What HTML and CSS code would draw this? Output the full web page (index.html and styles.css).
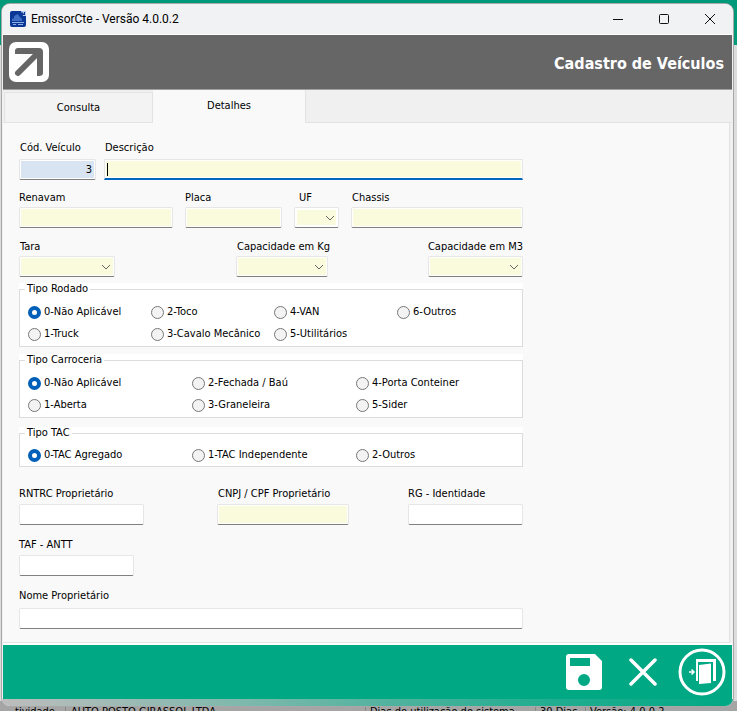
FILE: index.html
```html
<!DOCTYPE html>
<html lang="pt-BR">
<head>
<meta charset="utf-8">
<title>EmissorCte - Versão 4.0.0.2</title>
<link rel="stylesheet" href="styles.css">
</head>
<body>
<div class="backdrop">
  <div class="status">
    <span class="status-cell cell-a">tividade</span>
    <span class="status-cell cell-b">AUTO POSTO GIRASSOL LTDA</span>
    <span class="status-cell cell-c">Dias de utilização do sistema</span>
    <span class="status-cell cell-d">30 Dias</span>
    <span class="status-cell cell-e">Versão: 4.0.0.2</span>
  </div>
</div>
<main class="window">
  <header class="titlebar">
    <svg class="app-icon" viewBox="0 0 16 16" aria-hidden="true">
      <rect width="16" height="16" rx="2" fill="#0b3796"/>
      <path d="M6 4L8 3L9 5L12 8V10H2V8L4 7V5Z" fill="#3f6fc4"/>
      <path d="M2 11h12v1H2zM3 13h3v1H3zM8 13h5v1H8z" fill="#8fb0e6"/>
      <path d="M11 0h5v5h-3z" fill="#b9cdee"/>
      <path d="M12 1l2 2V1h1v3h-3z" fill="#0b3796"/>
    </svg>
    <span class="app-title">EmissorCte - Versão 4.0.0.2</span>
    <button class="win-btn" aria-label="Minimizar"><svg viewBox="0 0 12 12"><path d="M1 6.500h10"/></svg></button>
    <button class="win-btn" aria-label="Maximizar"><svg viewBox="0 0 12 12"><rect x="1.500" y="1.500" width="9" height="9" rx="1"/></svg></button>
    <button class="win-btn" aria-label="Fechar"><svg viewBox="0 0 12 12"><path d="M1 1l10 10M11 1L1 11"/></svg></button>
  </header>
  <div class="banner">
    <svg class="logo" viewBox="0 0 40 40" aria-hidden="true">
      <rect width="40" height="40" rx="7" fill="#fff"/>
      <path d="M6 12V9Q6 6 9 6H30Q34 6 34 10V31Q34 34 30 34H28V16L25 12Z" fill="#666"/>
      <path d="M9 31L27 13" stroke="#666" stroke-width="6" stroke-linecap="round"/>
    </svg>
    <h1>Cadastro de Veículos</h1>
  </div>
  <nav class="tabs">
    <button class="tab">Consulta</button>
    <button class="tab active">Detalhes</button>
  </nav>
  <form class="page">
    <div class="form">
      <div class="row r1">
        <div class="field w-cod ind"><label for="cod">Cód. Veículo</label><input id="cod" class="code" value="3"></div>
        <div class="field grow ind"><label for="desc">Descrição</label><span class="focus"><input id="desc" class="req"></span></div>
      </div>
      <div class="row r2">
        <div class="field w-ren"><label for="ren">Renavam</label><input id="ren" class="req"></div>
        <div class="field w-pla"><label for="pla">Placa</label><input id="pla" class="req"></div>
        <div class="field w-uf far"><label for="uf">UF</label><select id="uf" class="req inset"><option></option></select></div>
        <div class="field w-cha ind"><label for="cha">Chassis</label><input id="cha" class="req"></div>
      </div>
      <div class="row r3">
        <div class="field w-tara ind"><label for="tara">Tara</label><select id="tara" class="req"><option></option></select></div>
        <div class="field w-kg ind"><label for="kg">Capacidade em Kg</label><select id="kg" class="req"><option></option></select></div>
        <div class="field w-m3 ind"><label for="m3">Capacidade em M3</label><select id="m3" class="req"><option></option></select></div>
      </div>
      <fieldset class="group">
        <legend>Tipo Rodado</legend>
        <div class="radios four">
          <label><input type="radio" name="rodado" checked>0-Não Aplicável</label>
          <label><input type="radio" name="rodado">1-Truck</label>
          <label><input type="radio" name="rodado">2-Toco</label>
          <label><input type="radio" name="rodado">3-Cavalo Mecânico</label>
          <label><input type="radio" name="rodado">4-VAN</label>
          <label><input type="radio" name="rodado">5-Utilitários</label>
          <label><input type="radio" name="rodado">6-Outros</label>
        </div>
      </fieldset>
      <fieldset class="group">
        <legend>Tipo Carroceria</legend>
        <div class="radios three">
          <label><input type="radio" name="carroceria" checked>0-Não Aplicável</label>
          <label><input type="radio" name="carroceria">1-Aberta</label>
          <label><input type="radio" name="carroceria">2-Fechada / Baú</label>
          <label><input type="radio" name="carroceria">3-Graneleira</label>
          <label><input type="radio" name="carroceria">4-Porta Conteiner</label>
          <label><input type="radio" name="carroceria">5-Sider</label>
        </div>
      </fieldset>
      <fieldset class="group small">
        <legend>Tipo TAC</legend>
        <div class="radios three single">
          <label><input type="radio" name="tac" checked>0-TAC Agregado</label>
          <label><input type="radio" name="tac">1-TAC Independente</label>
          <label><input type="radio" name="tac">2-Outros</label>
        </div>
      </fieldset>
      <div class="row r4">
        <div class="field w-rn"><label for="rn">RNTRC Proprietário</label><input id="rn"></div>
        <div class="field w-cnpj ind"><label for="cnpj">CNPJ / CPF Proprietário</label><input id="cnpj" class="req"></div>
        <div class="field w-rg"><label for="rg">RG - Identidade</label><input id="rg"></div>
      </div>
      <div class="row r5">
        <div class="field w-rg"><label for="taf">TAF - ANTT</label><input id="taf"></div>
      </div>
      <div class="row r6">
        <div class="field grow"><label for="nome">Nome Proprietário</label><input id="nome"></div>
      </div>
    </div>
  </form>
  <footer class="actions">
    <button aria-label="Salvar"><svg class="i-save" viewBox="0 0 36 36"><path fill-rule="evenodd" d="M3 0H29L36 7V33Q36 36 33 36H3Q0 36 0 33V3Q0 0 3 0ZM4 4V12H24V4ZM18 20a6 6 0 1 0 0 12a6 6 0 1 0 0-12Z" fill="#fff"/></svg></button>
    <button aria-label="Cancelar"><svg class="i-x" viewBox="0 0 28 28"><path d="M2 2L26 26M26 2L2 26" stroke="#fff" stroke-width="3.500" stroke-linecap="round" fill="none"/></svg></button>
    <button aria-label="Sair"><svg class="i-exit" viewBox="0 0 48 48"><circle cx="24" cy="24" r="22" fill="none" stroke="#fff" stroke-width="3"/><path d="M18 11H38V33H35V14H20V33H18Z" fill="#fff"/><path d="M21 17L33 15.500V35L21 36Z" fill="#fff"/><path d="M11 24H16M13.500 21.500L16 24L13.500 26.500" stroke="#fff" stroke-width="1.500" fill="none"/></svg></button>
  </footer>
  <div class="edge"></div>
</main>
</body>
</html>
```
FILE: styles.css
```css
* { box-sizing: border-box; }
body {
  margin: 0;
  height: 100vh;
  overflow: hidden;
  display: grid;
  color: #000;
  font: 11px/14px "DejaVu Sans Condensed", "Noto Sans", sans-serif;
}
.backdrop, .window { grid-area: 1 / 1; min-height: 0; }
.backdrop {
  display: flex;
  flex-direction: column;
  justify-content: flex-end;
  background: linear-gradient(#00997a 45px, #dcdcdc 45px);
}
.status {
  display: flex;
  height: 10px;
  overflow: hidden;
  background: #a5a5a5;
  white-space: nowrap;
}
.status-cell { border-right: 1px solid #888; overflow: hidden; line-height: 22px; }
.cell-a { width: 66px; padding-left: 15px; }
.cell-b { width: 300px; padding-left: 5px; }
.cell-c { width: 170px; padding-left: 4px; }
.cell-d { width: 50px; padding-left: 4px; }
.cell-e { flex: 1; border: 0; padding-left: 4px; }
.window {
  display: flex;
  flex-direction: column;
  margin: 4px 4px 5px 2px;
  padding: 0 1px;
  background: #f0f0f0;
  border-radius: 8px;
  overflow: hidden;
  box-shadow: 0 0 0 1px #a8a8a8;
}
button { font: inherit; border: 0; background: none; padding: 0; color: inherit; }
.titlebar {
  display: flex;
  align-items: center;
  height: 31px;
  margin: 0 -1px;
  padding-left: 8px;
  background: #f0f2f4;
  border-bottom: 1px solid #fff;
  font: 12px/16px Roboto, "Noto Sans", sans-serif;
}
.app-icon { width: 16px; height: 16px; margin-right: 5px; }
.app-title { flex: 1; }
.win-btn { width: 46px; height: 28px; display: grid; place-items: center; }
.win-btn svg { width: 12px; height: 12px; fill: none; stroke: #111; stroke-width: 1; }
.banner {
  display: flex;
  align-items: center;
  justify-content: space-between;
  height: 55px;
  padding: 0 8px 0 6px;
  background: #666;
  border-bottom: 1px solid #a39f9f;
  color: #fff;
}
.logo { width: 40px; height: 40px; }
h1 { margin: 4px 0 0; font: bold 16px/20px "DejaVu Sans Condensed", "Noto Sans", sans-serif; }
.tabs { display: flex; height: 33px; align-items: flex-end; padding-left: 1px; background: linear-gradient(#f0f0f0 32px, #e3e3e3 32px); }
.tab {
  width: 149px;
  height: 31px;
  border: 1px solid #e3e3e3;
  background: #f3f3f3;
}
.tab.active {
  width: 153px;
  height: 33px;
  padding-bottom: 1px;
  background: #f9f9f9;
  border-width: 0 1px 0 0;
}
.page {
  flex: 1;
  margin-right: 2px;
  padding: 18px 16px 0;
  background: #f9f9f9;
  border: 1px solid #e3e3e3;
  border-width: 0 1px 1px 0;
}
.form { max-width: 504px; }
.row { display: flex; }
.field { display: flex; flex-direction: column; }
.field label { white-space: nowrap; }
.ind label { padding-left: 1px; }
.far label { padding-left: 5px; }
.w-m3 label { align-self: flex-end; }
.grow { flex: 1; }
input:not([type]), select {
  appearance: none;
  width: 100%;
  height: 21px;
  margin: 0;
  padding: 0 3px;
  font: inherit;
  color: #000;
  background: #fff;
  border: 1px solid #e6e6e6;
  border-bottom-color: #808080;
  border-radius: 2px;
  box-shadow: inset 0 0 0 1px #fff;
  outline: 0;
}
input.req, select.req { background-color: #fafbdc; }
select {
  background-image: url("data:image/svg+xml,%3Csvg xmlns='http://www.w3.org/2000/svg' width='10' height='6'%3E%3Cpath d='M1 1l4 4 4-4' fill='none' stroke='%23666'/%3E%3C/svg%3E");
  background-repeat: no-repeat;
  background-position: right 3px center;
}
select.inset { box-shadow: inset 0 0 0 2px #fff; }
input.code { background: #d8e4f1; text-align: right; }
.focus { position: relative; }
.focus input:not([type]) { border-bottom: 2px solid #0067c0; border-radius: 0; }
.focus::after { content: ""; position: absolute; left: 3px; top: 4px; width: 1px; height: 13px; background: #000; }
.r1 { gap: 8px; }
.r1 .field { gap: 4px; }
.r2 { margin-top: 11px; gap: 12px; }
.r3 { margin-top: 12px; display: grid; grid-template-columns: 217fr 192fr 95fr; }
.r2 .field, .r3 .field { gap: 2px; }
.w-cod { width: 77px; }
.w-ren { width: 154px; }
.w-pla { width: 97px; }
.w-uf { width: 45px; }
.w-cha { flex: 1; }
.w-tara { width: 96px; }
.w-kg { width: 92px; }
.w-m3 { width: 95px; }
.group {
  min-width: 0;
  margin: 5px 0 0;
  padding: 0;
  border: 1px solid #dcdcdc;
  background: #fff;
  box-shadow: 0 -6px 0 #fff;
}
.group.small { margin-top: 7px; }
legend { margin-left: 5px; padding: 0 2px; }
.radios { display: grid; grid-auto-flow: column; grid-template-rows: 22px 22px; padding: 5px 2px 1px 8px; }
.four { grid-template-columns: repeat(4, 1fr); }
.three { grid-template-columns: repeat(3, 1fr); }
.group + .group { margin-top: 6px; }
.group + .group.small { margin-top: 8px; }
.single { grid-template-rows: 22px; padding-bottom: 0; padding-top: 4px; }
.radios label { display: flex; align-items: center; gap: 3px; white-space: nowrap; }
input[type="radio"] { appearance: none; width: 13px; height: 13px; margin: 0; border: 1px solid #777; border-radius: 50%; background: #f3f3f3; }
input[type="radio"]:checked { border: 4px solid #005fb8; background: #fff; }
.r4 { margin-top: 20px; display: grid; grid-template-columns: 198fr 191fr 115fr; }
.r5, .r6 { margin-top: 13px; }
.r4 .field, .r5 .field { gap: 3px; }
.r6 .field { gap: 5px; }
.w-rn { width: 125px; }
.w-cnpj { width: 132px; }
.w-rg { width: 115px; }
.actions {
  display: flex;
  align-items: center;
  justify-content: flex-end;
  height: 56px;
  padding-right: 6px;
  background: #00a884;
  border-top: 2px solid #fff;
}
.actions svg { display: block; }
.i-save { width: 36px; height: 36px; }
.i-x { width: 28px; height: 28px; margin: 0 21px 0 27px; }
.i-exit { width: 48px; height: 48px; }
.edge { height: 7px; margin: 0 -1px; background: linear-gradient(90deg, #bdbdbd, #7ab8ab 35%, #2aae92 70%, #00a884); }
```
